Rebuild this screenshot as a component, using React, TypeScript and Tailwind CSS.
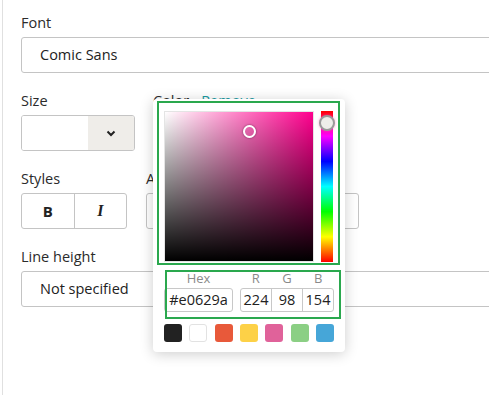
import React from 'react';

const swatches = [
  'bg-[#222222]',
  'bg-white border border-[#e2e2e2]',
  'bg-[#e8593a]',
  'bg-[#fdd147]',
  'bg-[#e0629a]',
  'bg-[#8bcf84]',
  'bg-[#46a6d8]',
];

function Label({ children }: { children: React.ReactNode }) {
  return <div className="h-5 leading-5 text-[14.5px] text-[#2b2b2b]">{children}</div>;
}

function ColorPicker() {
  return (
    <div className="absolute left-[153px] top-[99px] w-[192px] h-[253px] bg-white rounded-[4px] shadow-[0_2px_14px_rgba(0,0,0,0.2)] px-[11px] pt-[12px]">
      <div className="flex gap-[7px]">
        <div className="relative w-[150px] h-[151px] bg-[#ff008e] border border-[#e4e4e4]">
          <div className="absolute inset-0 bg-linear-to-r from-white to-transparent" />
          <div className="absolute inset-0 bg-linear-to-b from-transparent to-black" />
          <div className="absolute left-[78px] top-[13px] w-[13px] h-[13px] rounded-full border-2 border-white shadow-[0_0_2px_rgba(0,0,0,0.6)]" />
        </div>
        <div className="relative w-[12px] h-[151px] bg-[linear-gradient(to_bottom,#f00,#f0f,#00f,#0ff,#0f0,#ff0,#f00)]">
          <div className="absolute -left-[2px] top-[4px] w-4 h-4 rounded-full bg-[#eeeeea] border-2 border-[#9a9a9a] shadow-[0_0_3px_rgba(255,100,180,0.6)]" />
        </div>
      </div>

      <div className="flex gap-[7px] mt-[8px]">
        <div className="w-[69px] flex flex-col items-center">
          <span className="h-[16px] leading-[16px] text-[13px] text-[#8a8a8a]">Hex</span>
          <div className="mt-[2px] w-full h-[24px] border border-[#c8c8c8] rounded-[3px] flex items-center justify-center text-[14.5px] text-[#222]">
            #e0629a
          </div>
        </div>
        <div className="w-[94px] flex flex-col">
          <div className="flex h-[16px] leading-[16px] text-[13px] text-[#8a8a8a]">
            <span className="flex-1 text-center">R</span>
            <span className="flex-1 text-center">G</span>
            <span className="flex-1 text-center">B</span>
          </div>
          <div className="mt-[2px] h-[24px] flex border border-[#c8c8c8] rounded-[3px] text-[14.5px] text-[#222]">
            <span className="flex-1 flex items-center justify-center">224</span>
            <span className="flex-1 flex items-center justify-center border-l border-[#c8c8c8]">98</span>
            <span className="flex-1 flex items-center justify-center border-l border-[#c8c8c8]">154</span>
          </div>
        </div>
      </div>

      <div className="flex justify-between mt-[12px]">
        {swatches.map((c) => (
          <div key={c} className={`w-[18px] h-[18px] rounded-[3px] ${c}`} />
        ))}
      </div>

      <div className="absolute left-[4px] top-[2px] w-[183px] h-[164px] border-2 border-[#2aa84e] pointer-events-none" />
      <div className="absolute left-[12px] top-[171px] w-[176px] h-[49px] border-2 border-[#2aa84e] pointer-events-none" />
    </div>
  );
}

export default function App() {
  return (
    <div className="relative w-[489px] h-[395px] overflow-hidden bg-white pl-[2px] font-['Open_Sans',sans-serif]">
      <div className="h-full border-l border-[#e0e0e0] pl-[18px] pt-[13px] w-[560px]">
        <Label>Font</Label>
        <div className="mt-[4px] h-[36px] border border-[#c4c4c4] rounded-[3px] flex items-center pl-[18px] text-[14.5px] text-[#222]">
          Comic Sans
        </div>

        <div className="mt-[18px] flex">
          <div className="w-[114px]">
            <Label>Size</Label>
            <div className="mt-[4px] h-[36px] border border-[#c4c4c4] rounded-[3px] flex overflow-hidden">
              <div className="flex-1 bg-white" />
              <div className="w-[46px] bg-[#efede9] flex items-center justify-center">
                <svg width="10" height="7" viewBox="0 0 10 7" fill="none">
                  <path d="M1.5 1.5 L5 5 L8.5 1.5" stroke="#222" strokeWidth="2" />
                </svg>
              </div>
            </div>
          </div>
          <div className="ml-[18px]">
            <div className="h-5 leading-5 text-[14.5px] flex gap-[12px]">
              <span className="text-[#2b2b2b]">Color</span>
              <span className="text-[#1b9ba3]">Remove</span>
            </div>
          </div>
        </div>

        <div className="mt-[18px] flex">
          <div className="w-[106px]">
            <Label>Styles</Label>
            <div className="mt-[4px] h-[36px] border border-[#c4c4c4] rounded-[3px] flex">
              <div className="flex-1 flex items-center justify-center font-bold text-[15px] text-[#222]">B</div>
              <div className="flex-1 flex items-center justify-center border-l border-[#c4c4c4] font-['Liberation_Serif',serif] italic font-bold text-[16px] text-[#222]">
                I
              </div>
            </div>
          </div>
          <div className="ml-[19px] w-[213px]">
            <Label>Alignment</Label>
            <div className="mt-[4px] h-[36px] border border-[#c4c4c4] rounded-[3px]" />
          </div>
        </div>

        <div className="mt-[18px]">
          <Label>Line height</Label>
          <div className="mt-[4px] h-[36px] border border-[#c4c4c4] rounded-[3px] flex items-center pl-[18px] text-[14.5px] text-[#222]">
            Not specified
          </div>
        </div>
      </div>
      <ColorPicker />
    </div>
  );
}
